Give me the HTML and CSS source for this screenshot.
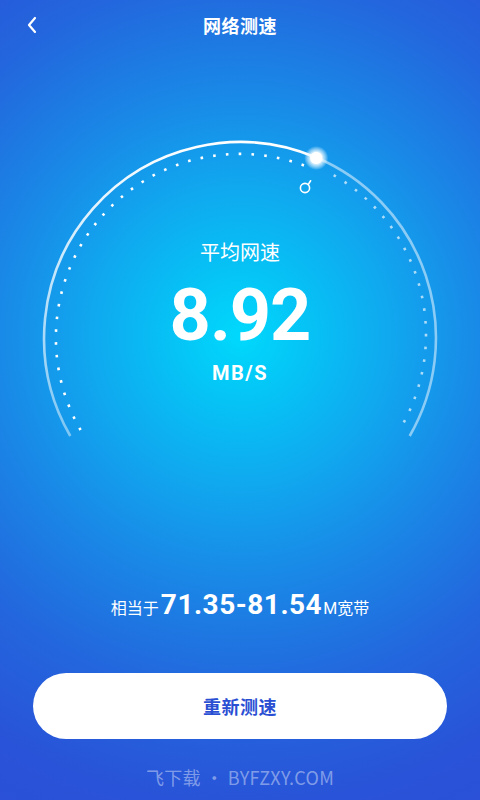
FILE: index.html
```html
<!DOCTYPE html>
<html lang="zh">
<head>
<meta charset="utf-8">
<link rel="stylesheet" href="styles.css">
</head>
<body>
<div class="screen">
  <header class="topbar">
    <svg class="back" width="12" height="18" viewBox="0 0 12 18"><path d="M9 2 L3 9 L9 16" fill="none" stroke="#fff" stroke-width="2.2" stroke-linecap="round" stroke-linejoin="round"/></svg>
    <h1 class="title">网络测速</h1>
  </header>

  <section class="gauge">
    <svg class="dial" width="480" height="320" viewBox="0 0 480 320">
      <defs>
        <linearGradient id="arcg" x1="0" y1="1" x2="0" y2="0">
          <stop offset="0" stop-color="#fff" stop-opacity="0.45"/>
          <stop offset="1" stop-color="#fff" stop-opacity="1"/>
        </linearGradient>
        <radialGradient id="knob">
          <stop offset="0" stop-color="#fff" stop-opacity="1"/>
          <stop offset="0.45" stop-color="#fff" stop-opacity="0.95"/>
          <stop offset="0.7" stop-color="#e6f6ff" stop-opacity="0.6"/>
          <stop offset="1" stop-color="#fff" stop-opacity="0"/>
        </radialGradient>
      </defs>
      <path d="M70.3 306 A196 196 0 0 1 316.3 27.5" fill="none" stroke="url(#arcg)" stroke-width="2.6"/>
      <path d="M316.3 27.5 A196 196 0 0 1 409.7 306" fill="none" stroke="#fff" stroke-opacity="0.5" stroke-width="2.6"/>
      <path d="M80.6 300 A184 184 0 0 1 305.5 36" fill="none" stroke="#fff" stroke-width="2.6" stroke-dasharray="2.6 10.2"/>
      <path d="M326 41 A184 184 0 0 1 399.4 300" fill="none" stroke="#fff" stroke-opacity="0.65" stroke-width="2.6" stroke-dasharray="2.6 10.2" stroke-dashoffset="4"/>
      <circle cx="316.3" cy="28" r="12" fill="url(#knob)"/>
      <circle cx="316.3" cy="28" r="6" fill="#fff"/>
      <circle cx="305" cy="58" r="4.6" fill="none" stroke="#fff" stroke-width="1.6"/>
      <path d="M308.2 54.6 L310.6 50.8" stroke="#fff" stroke-width="1.6" stroke-linecap="round"/>
    </svg>
    <div class="readout">
      <div class="label">平均网速</div>
      <div class="value">8.92</div>
      <div class="unit">MB/S</div>
    </div>
  </section>

  <p class="equiv"><span class="cn">相当于</span><span class="num">71.35-81.54</span><span class="m">M</span><span class="cn">宽带</span></p>

  <button class="retest">重新测速</button>

  <footer class="mark">飞下载 • BYFZXY.COM</footer>
</div>
</body>
</html>
```

FILE: styles.css
```css
html, body {
  margin: 0;
  padding: 0;
}
body {
  font-family: "Noto Sans CJK SC", "Noto Sans", sans-serif;
  color: #fff;
}
.screen {
  width: 480px;
  height: 800px;
  overflow: hidden;
  display: flex;
  flex-direction: column;
  align-items: center;
  background:
    radial-gradient(circle at 50% 42%, #00d9fd 0px, #06c2f5 70px, #10a8ef 150px, #1a86e6 250px, #2366dd 360px, #2953d8 470px, #2a4fd7 560px);
}
.topbar {
  position: relative;
  width: 100%;
  height: 50px;
  display: flex;
  align-items: center;
  justify-content: center;
}
.back {
  position: absolute;
  left: 26px;
  top: 16px;
}
.title {
  margin: 0;
  font-size: 18px;
  font-weight: 700;
  line-height: 50px;
  letter-spacing: 0.5px;
}
.gauge {
  margin-top: 80px;
  width: 480px;
  height: 320px;
  display: grid;
}
.dial, .readout {
  grid-area: 1 / 1;
}
.readout {
  display: flex;
  flex-direction: column;
  align-items: center;
  padding-top: 107px;
}
.label {
  font-size: 20px;
  line-height: 30px;
  font-weight: 400;
}
.value {
  font-family: Roboto, "Open Sans", sans-serif;
  font-weight: 700;
  font-size: 72px;
  line-height: 74px;
  margin-top: 12px;
  letter-spacing: -1px;
}
.unit {
  font-family: Roboto, sans-serif;
  font-weight: 700;
  font-size: 20px;
  line-height: 24px;
  margin-top: 8px;
  letter-spacing: 1.5px;
}
.equiv {
  margin: 135px 0 0;
  display: flex;
  align-items: baseline;
  height: 40px;
  line-height: 40px;
}
.cn {
  font-size: 16px;
}
.num {
  font-family: Roboto, sans-serif;
  font-weight: 700;
  font-size: 28px;
  letter-spacing: 0.5px;
  margin: 0 1px 0 2px;
}
.m {
  font-family: Roboto, sans-serif;
  font-size: 16px;
}
.retest {
  margin-top: 48px;
  width: 414px;
  height: 66px;
  border: none;
  border-radius: 33px;
  background: #fff;
  color: #2a4fd3;
  font-family: "Noto Sans CJK SC", sans-serif;
  font-size: 18px;
  font-weight: 700;
  letter-spacing: 0.5px;
  padding: 0;
}
.mark {
  margin-top: 26px;
  font-family: "Noto Sans CJK SC", "Noto Sans", sans-serif;
  font-size: 18px;
  line-height: 24px;
  color: rgba(255, 255, 255, 0.42);
  letter-spacing: 0.3px;
}
```
